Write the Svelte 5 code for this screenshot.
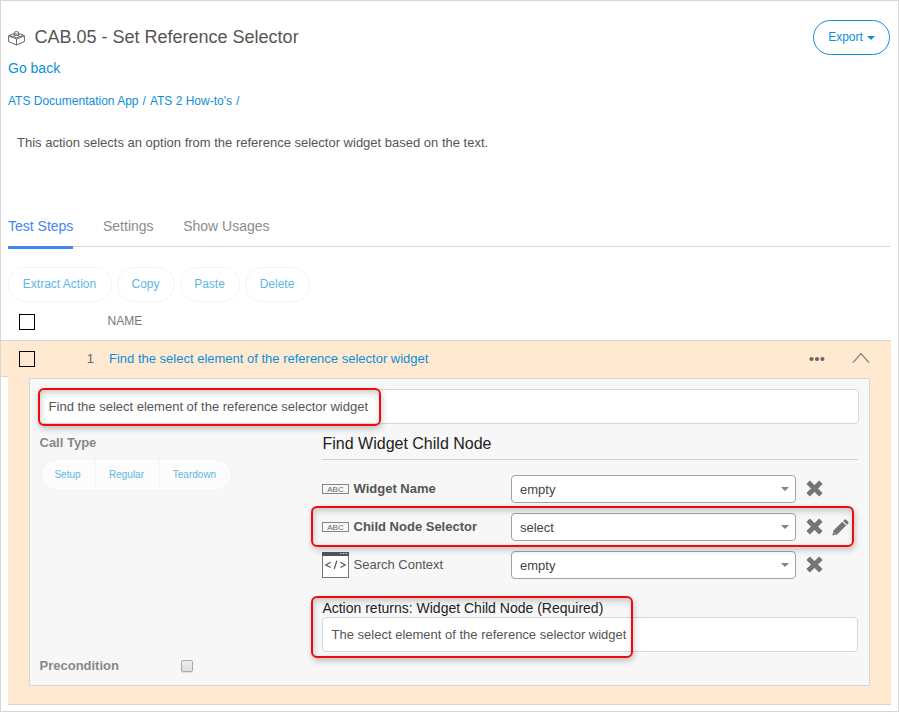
<script>
  const actions = [
    { label: 'Extract Action', width: 104 },
    { label: 'Copy', width: 58 },
    { label: 'Paste', width: 60 },
    { label: 'Delete', width: 65 }
  ];
  const params = [
    { name: 'Widget Name', value: 'empty', kind: 'abc', required: true },
    { name: 'Child Node Selector', value: 'select', kind: 'abc', required: true, editable: true },
    { name: 'Search Context', value: 'empty', kind: 'code', required: false }
  ];
</script>

<div class="page">
  <header>
    <div class="heading">
      <svg class="brick" width="17" height="15" viewBox="0 0 17 15" fill="none" stroke="#666" stroke-width="1">
        <path d="M0.6 4.8 L8.5 8 L16.4 4.8 M0.6 4.8 V10.6 L8.5 14 L16.4 10.6 V4.8 M8.5 8 V14 M0.6 4.8 L3.4 3.6 M16.4 4.8 L13.6 3.6" />
        <ellipse cx="8.5" cy="1.9" rx="2.3" ry="1.3" />
        <path d="M6.2 2 V3.6 M10.8 2 V3.6" />
        <ellipse cx="4.8" cy="4.3" rx="2.1" ry="1.2" />
        <ellipse cx="12.2" cy="4.3" rx="2.1" ry="1.2" />
        <ellipse cx="8.5" cy="5.5" rx="2.1" ry="1.2" />
      </svg>
      <h1>CAB.05 - Set Reference Selector</h1>
    </div>
    <button class="export">Export <i class="caret"></i></button>
  </header>
  <a class="back">Go back</a>
  <nav class="crumbs"><a>ATS Documentation App</a><span>/</span><a>ATS 2 How-to's</a><span>/</span></nav>
  <p class="desc">This action selects an option from the reference selector widget based on the text.</p>

  <div class="tabs">
    <span class="tab active">Test Steps</span>
    <span class="tab">Settings</span>
    <span class="tab">Show Usages</span>
  </div>

  <div class="actions">
    {#each actions as a}
      <button style="width: {a.width}px">{a.label}</button>
    {/each}
  </div>

  <div class="listhead">
    <span class="box"></span>
    <span class="colname">NAME</span>
  </div>

  <div class="step">
    <span class="box"></span>
    <span class="num">1</span>
    <a class="stepname">Find the select element of the reference selector widget</a>
    <svg class="dots" width="16" height="6" viewBox="0 0 16 6" fill="#666"><circle cx="2.5" cy="3" r="2.1" /><circle cx="8" cy="3" r="2.1" /><circle cx="13.4" cy="3" r="2.1" /></svg>
    <svg class="chev" width="18" height="12" viewBox="0 0 18 12" fill="none" stroke="#777" stroke-width="1.1"><path d="M1 10.6 L9 1.6 L17 10.6" /></svg>
  </div>

  <div class="stepbody">
    <div class="panel">
      <div class="input top">Find the select element of the reference selector widget</div>
      <div class="cols">
        <div class="left">
          <div class="label">Call Type</div>
          <div class="group">
            <button class="setup">Setup</button><button class="regular">Regular</button><button class="teardown">Teardown</button>
          </div>
          <div class="pre"><span class="label">Precondition</span><span class="check"></span></div>
        </div>
        <div class="right">
          <h2>Find Widget Child Node</h2>
          {#each params as p}
            <div class="param">
              <span class="kind">
                {#if p.kind === 'abc'}
                  <span class="abc">ABC</span>
                {:else}
                  <svg width="27" height="26" viewBox="0 0 27 26">
                    <rect x="0.5" y="0.5" width="26" height="25" fill="#fff" stroke="#777" />
                    <rect x="0" y="0" width="27" height="4" fill="#555" />
                    <path d="M18 1.5h1.5M20.8 1.5h1.5M23.5 1.5h1.5" stroke="#ddd" />
                    <path d="M8.6 10.2 L3.8 12.9 L8.6 15.6 M18.4 10.2 L23.2 12.9 L18.4 15.6 M14.8 8.8 L12.2 17" fill="none" stroke="#555" stroke-width="1.2" />
                  </svg>
                {/if}
              </span>
              <span class="pname" class:bold={p.required}>{p.name}</span>
              <div class="select">{p.value}<i class="caret"></i></div>
              <svg class="x" width="17" height="17" viewBox="0 0 17 17"><path d="M2.1 2.3 L14.9 14.7 M14.9 2.3 L2.1 14.7" stroke="#757575" stroke-width="5" /></svg>
              {#if p.editable}
                <svg class="pencil" width="17" height="17" viewBox="0 0 17 17" fill="#757575">
                  <path d="M0.3 16.6 L1.5 11.6 L10.3 2.8 L14.1 6.6 L5.2 15.4 Z" />
                  <path d="M11.1 2 L12.6 0.6 Q13.3 0 14.1 0.7 L16.2 2.8 Q16.9 3.6 16.2 4.4 L14.9 5.8 Z" />
                  <path d="M1.8 13.6 L3.3 15.1" stroke="#d5d5d5" stroke-width="0.9" />
                </svg>
              {/if}
            </div>
          {/each}
          <div class="returns">Action returns: Widget Child Node (Required)</div>
          <div class="input">The select element of the reference selector widget</div>
        </div>
      </div>
      <div class="mark m1"></div>
      <div class="mark m2"></div>
      <div class="mark m3"></div>
    </div>
  </div>
</div>

<style>
  :global(body) { margin: 0; background: #fff; }
  * { box-sizing: border-box; }
  .page {
    width: 899px; height: 712px; border: 1px solid #d7d7d7; overflow: hidden;
    font-family: "Liberation Sans", Arial, sans-serif; font-size: 13px; color: #555; background: #fff;
  }
  button { font-family: inherit; padding: 0; margin: 0; background: #fff; white-space: nowrap; }
  a { color: #0d8fd9; }
  header { display: flex; justify-content: space-between; height: 56px; padding: 19px 8px 0 7px; }
  .heading { display: flex; height: 34px; align-items: center; }
  .brick { margin-top: 3px; }
  h1 { margin: 0 0 0 9.5px; font-size: 18px; font-weight: 400; line-height: 34px; }
  .export { width: 77px; height: 35px; border: 1px solid #0d8fd9; border-radius: 18px; color: #0d8fd9; font-size: 12px; display: flex; align-items: center; justify-content: center; gap: 4px; padding-bottom: 2px; }
  .export .caret { margin-top: 2px; }
  .caret { width: 0; height: 0; border: 4px solid transparent; border-top-color: currentColor; border-bottom: 0; }
  .back { display: block; height: 23px; line-height: 23px; padding-left: 7px; font-size: 14px; }
  .crumbs { display: flex; gap: 4px; height: 41px; line-height: 42px; padding-left: 7px; font-size: 12px; color: #0d8fd9; }
  .desc { margin: 0; padding-left: 16px; height: 85px; line-height: 43px; }
  .tabs { display: flex; gap: 30px; height: 43px; margin: 0 8px 0 7px; box-shadow: inset 0 -2px #fff, inset 0 -3px #d7d7d7; }
  .tab { height: 43px; line-height: 41px; font-size: 14px; color: #8c8c8c; margin-right: -0.4px; }
  .active { color: #4285f4; border-bottom: 3px solid #4285f4; }
  .actions { display: flex; gap: 5px; padding: 18px 0 0 7px; height: 53px; }
  .actions button { height: 35px; border: 1px solid #f4f4f4; border-radius: 18px; color: #5fb6e6; font-size: 12px; padding: 0 1px 2px 0; }
  .listhead { display: flex; height: 38px; padding: 12px 0 0 18px; }
  .box { width: 16px; height: 16px; border: 1px solid #000; background: #fff; flex: none; }
  .colname { margin-left: 72.5px; font-size: 12px; line-height: 14px; color: #777; }
  .step .box { background: transparent; }
  .step { display: flex; align-items: center; width: 890px; height: 36px; padding-left: 18px; background: #ffead1; border-top: 1px solid #d7d7d7; }
  .num { width: 59px; text-align: right; color: #666; }
  .stepname { width: 320px; margin-left: 15px; white-space: nowrap; }
  .dots { margin-left: 380px; margin-top: 1px; }
  .chev { margin-left: 27px; margin-top: -2px; }
  .stepbody { width: 890px; height: 329px; border-bottom: 1px solid #d7d7d7; padding: 2px 21px 0 28px; background: linear-gradient(#d7d7d7 0 1px, #fff 1px) 0 0 / 7px 100% no-repeat, #ffead1; }
  .stepbody { clip-path: polygon(0 0, 0 1px, 7px 1px, 7px 100%, 100% 100%, 100% 0); }
  .panel { position: relative; width: 841px; height: 308px; border: 1px solid #d7d7d7; background: #f7f7f7; padding: 10px 10px 0 9px; }
  .input { height: 35px; line-height: 33px; border: 1px solid #d7d7d7; border-radius: 4px; background: #fff; padding-left: 8.6px; white-space: nowrap; }
  .cols { display: flex; }
  .left { width: 283px; padding-top: 10px; }
  .label { font-weight: 700; color: #888; line-height: 17px; display: block; margin-left: 0.5px; }
  .group { display: flex; margin: 8px 0 0 2px; height: 32px; }
  .group button { height: 32px; border: 1px solid #f3f3f3; background: #fcfcfc; color: #5fb6e6; font-size: 10px; border-right-width: 0; padding: 0 2px 1px 0; }
  .group .setup { width: 54px; border-radius: 16px 0 0 16px; }
  .group .regular { width: 64px; }
  .group .teardown { width: 73px; border-radius: 0 16px 16px 0; border-right-width: 1px; }
  .pre { display: flex; justify-content: space-between; align-items: center; width: 154px; margin-top: 166px; }
  .check { width: 12px; height: 12px; border: 1px solid #aaa; border-radius: 2px; background: linear-gradient(#eee, #dcdcdc); box-shadow: 0 1px 1px #ddd; margin-top: 1px; }
  .right { width: 536px; }
  h2 { margin: 0 0 10px; height: 36px; border-bottom: 1px solid #d3d3d3; font-size: 16px; font-weight: 400; line-height: 40px; color: #222; padding-left: 0.5px; }
  .param { display: flex; align-items: center; height: 38px; }
  .kind { width: 27px; height: 26px; display: flex; align-items: center; }
  .abc { width: 27px; height: 10px; border: 1px solid #858585; color: #666; font-size: 8px; line-height: 9px; text-align: center; }
  .pname { width: 157.5px; margin-left: 4.5px; padding-bottom: 2px; }
  .bold { font-weight: 700; }
  .select { display: flex; justify-content: space-between; align-items: center; width: 285px; height: 28px; border: 1px solid #a3a3a3; border-radius: 4px; background: #fff; padding: 1px 6px 0 8px; color: #444; }
  .select .caret { color: #808080; margin-top: -1px; }
  .x { margin-left: 10px; margin-top: -1px; }
  .pencil { margin-left: 9px; margin-top: 1px; }
  .returns { margin-top: 15px; height: 18px; line-height: 18px; font-size: 14px; color: #222; white-space: nowrap; padding-left: 0.4px; }
  .mark { position: absolute; border: 2px solid #f00a0a; border-radius: 6px; box-shadow: 1px 3px 6px rgba(0,0,0,.22), inset 1px 3px 6px rgba(0,0,0,.2); }
  .m1 { left: 8px; top: 9px; width: 343px; height: 38px; }
  .m2 { left: 281px; top: 127px; width: 543px; height: 41px; }
  .m3 { left: 281px; top: 217px; width: 322px; height: 62px; }
</style>
